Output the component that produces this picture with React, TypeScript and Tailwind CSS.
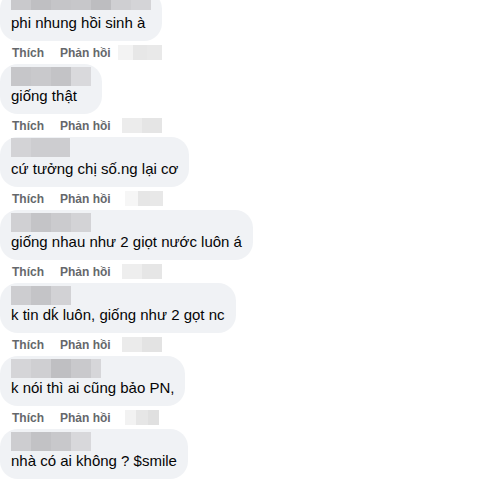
import React from 'react';

type Comment = {
  text: string;
  name: string[]; // blurred name tiles
  nameW?: number[];
  nameTop: number;
  tag: { left: number; width: number; shades: string[] };
};

const comments: Comment[] = [
  {
    text: 'phi nhung hồi sinh à',
    name: ['#c9c9cc', '#bfbfc2', '#c5c5c8', '#c7c7ca', '#bdbdc0', '#cfcfd2', '#d4d4d7'],
    nameTop: 0,
    tag: { left: 118, width: 44, shades: ['#f3f3f3', '#e7e7e7', '#e9e9e9'] },
  },
  {
    text: 'giống thật',
    name: ['#c6c6c9', '#c9c9cc', '#c3c3c6', '#d9d9dc'],
    nameTop: 3,
    tag: { left: 122, width: 40, shades: ['#ececec', '#e5e5e5'] },
  },
  {
    text: 'cứ tưởng chị số.ng lại cơ',
    name: ['#d3d3d6', '#cdcdd0'],
    nameW: [20, 39],
    nameTop: 1,
    tag: { left: 125, width: 38, shades: ['#f6f6f6', '#e6e6e6', '#e8e8e8'] },
  },
  {
    text: 'giống nhau như 2 giọt nước luôn á',
    name: ['#d0d0d3', '#c4c4c7', '#cbcbce', '#d3d3d6'],
    nameTop: 3,
    tag: { left: 122, width: 40, shades: ['#eeeeee', '#e6e6e6'] },
  },
  {
    text: 'k tin dk\u0301 luôn, giống như 2 gọt nc',
    name: ['#cdcdd0', '#c4c4c7', '#d2d2d5'],
    nameTop: 3,
    tag: { left: 122, width: 40, shades: ['#ebebeb', '#e3e3e3'] },
  },
  {
    text: 'k nói thì ai cũng bảo PN,',
    name: ['#d5d5d8', '#cfcfd2', '#bfbfc2', '#c9c9cc', '#d6d6d9'],
    nameW: [20, 20, 20, 20, 10],
    nameTop: 3,
    tag: { left: 125, width: 34, shades: ['#f2f2f2', '#e6e6e6', '#e0e0e0'] },
  },
  {
    text: 'nhà có ai không ? $smile',
    name: ['#cdcdd0', '#c2c2c5', '#c8c8cb', '#d8d8db'],
    nameTop: 3,
    tag: { left: 122, width: 40, shades: [] },
  },
];

function Bubble({ c }: { c: Comment }) {
  return (
    <div className="inline-flex flex-col h-[50px] bg-[#f0f2f5] rounded-[18px] pl-[11px] pr-[11px]">
      <div className="h-[22px] flex items-start" style={{ paddingTop: c.nameTop }}>
        <div className="flex h-[19px]">
          {c.name.map((s, i) => (
            <div key={i} className="h-full" style={{ background: s, width: c.nameW ? c.nameW[i] : 20 }} />
          ))}
        </div>
      </div>
      <div className="text-[15px] leading-[20px] text-[#050505] whitespace-nowrap">{c.text}</div>
    </div>
  );
}

function Actions({ c }: { c: Comment }) {
  const w = c.tag.shades.length ? c.tag.width / c.tag.shades.length : 0;
  return (
    <div className="relative h-[23px] flex items-center pl-[12px] text-[12px] font-bold text-[#65676b]">
      <span>Thích</span>
      <span className="ml-[16px]">Phản hồi</span>
      <div className="absolute top-[4px] h-[15px] flex" style={{ left: c.tag.left }}>
        {c.tag.shades.map((s, i) => (
          <div key={i} className="h-full" style={{ background: s, width: w }} />
        ))}
      </div>
    </div>
  );
}

export default function App() {
  return (
    <div
      className="w-[493px] h-[484px] overflow-hidden bg-white"
      style={{ fontFamily: '"Liberation Sans", Arial, sans-serif' }}
    >
      <div className="-mt-[9px] flex flex-col">
        {comments.map((c, i) => (
          <div key={i} className="flex flex-col items-start">
            <Bubble c={c} />
            {i < comments.length - 1 && <Actions c={c} />}
          </div>
        ))}
      </div>
    </div>
  );
}
